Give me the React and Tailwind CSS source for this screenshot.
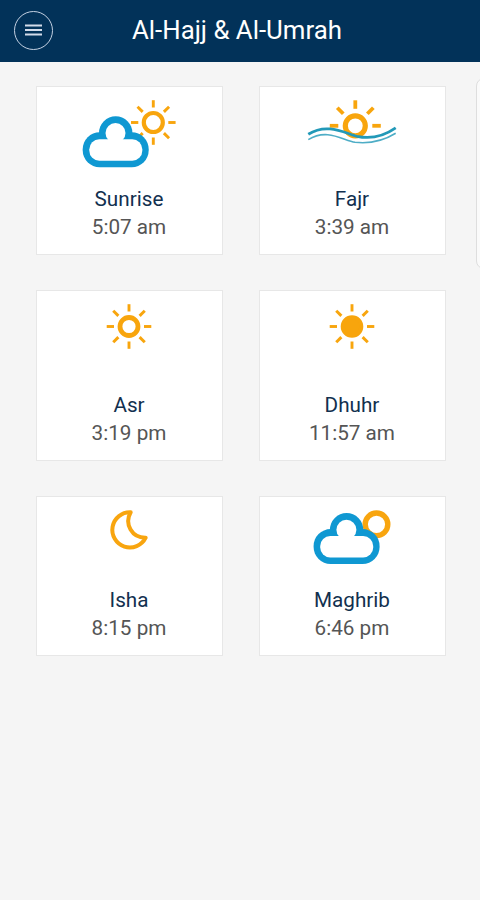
const FULL_SUN = [0, 45, 90, 135, 180, 225, 270, 315];
const HALF_SUN = [0, 45, 90, 270, 315];

const Sun = ({ x, y, r, width, from, to, rayWidth = 2.9, rays = FULL_SUN, filled }) => (
  <g transform={`translate(${x} ${y})`} stroke="#f8a50d">
    <circle r={r} strokeWidth={width} fill={filled ? "#f8a50d" : "none"} />
    {rays.map((angle) => (
      <path key={angle} d={`M0 ${-from}V${-to}`} strokeWidth={rayWidth} transform={`rotate(${angle})`} />
    ))}
  </g>
);

// outer shape in blue, the same shape smaller in white on top
const Cloud = ({ x, y }) => (
  <g transform={`translate(${x} ${y})`}>
    <g fill="#0f98d2">
      <circle cx="33" cy="17" r="16.7" />
      <rect x="0" y="16.3" width="66" height="35" rx="17" />
    </g>
    <g fill="#ffffff">
      <circle cx="32.8" cy="17" r="10" />
      <rect x="6.6" y="23.3" width="53" height="21.4" rx="10" />
    </g>
  </g>
);

const SunriseIcon = () => (
  <>
    <Sun x={83.3} y={35.5} r={9.5} width={4.2} from={15} to={22.3} />
    <Cloud x={12.7} y={29} />
  </>
);

const FajrIcon = () => (
  <>
    <Sun x={62.3} y={38.8} r={10} width={5.2} from={17} to={25.5} rayWidth={3.8} rays={HALF_SUN} />
    <path d="M15 53C31 40 48 52 62 52.5Q84 56 103 46V62H15Z" fill="#ffffff" />
    <g fill="none" stroke="#2299b8">
      <path d="M15.3 47.3C34 35.3 52 46.3 64 49.3Q84 53.8 102.7 40.8" strokeWidth="2.8" />
      <path d="M15.3 52.6C34 40.8 50 53.3 62 55.3Q84 57.8 102.7 46.3" strokeWidth="1.6" opacity="0.8" />
    </g>
  </>
);

const AsrIcon = () => <Sun x={59} y={35.5} r={9} width={4.8} from={15} to={22.3} />;

const DhuhrIcon = () => <Sun x={59} y={35.5} r={9.3} width={4} from={15} to={22.3} filled />;

const IshaIcon = () => (
  <path
    d="M60.7 15.3C54 27 62 41 75.7 40.7A17.6 17.6 0 1 1 60.7 15.3Z"
    fill="none"
    stroke="#f8a50f"
    strokeWidth="4"
    strokeLinejoin="round"
  />
);

const MaghribIcon = () => (
  <>
    <circle cx="83.5" cy="27.3" r="11.3" fill="none" stroke="#f8a50f" strokeWidth="5.4" />
    <Cloud x={20.6} y={15.8} />
  </>
);

const prayers = [
  { name: "Sunrise", time: "5:07 am", icon: SunriseIcon },
  { name: "Fajr", time: "3:39 am", icon: FajrIcon },
  { name: "Asr", time: "3:19 pm", icon: AsrIcon },
  { name: "Dhuhr", time: "11:57 am", icon: DhuhrIcon },
  { name: "Isha", time: "8:15 pm", icon: IshaIcon },
  { name: "Maghrib", time: "6:46 pm", icon: MaghribIcon },
];

const PrayerCard = ({ name, time, icon: Icon }) => (
  <div className="flex flex-col items-center justify-between bg-white pb-[13px] ring-1 ring-[#e7e7e7]">
    <svg className="h-[84px] w-[119px]" viewBox="0 0 119 84">
      <Icon />
    </svg>
    <div className="pr-px text-center text-[20.7px] leading-7">
      <h2 className="text-[#12304f]">{name}</h2>
      <p className="text-[#555555]">{time}</p>
    </div>
  </div>
);

const Header = () => (
  <header className="flex h-[62px] items-center bg-[#023259] pb-0.5 pl-3.5 text-white">
    <button className="flex size-[39px] items-center justify-center rounded-full border-[1.5px] border-[#c3d0e2]">
      <svg className="h-3 w-[17px]" viewBox="0 0 17 12" stroke="#d3dcea" strokeWidth="2.2">
        <path d="M0 1.5H17M0 6H17M0 10.5H17" />
      </svg>
    </button>
    <h1 className="ml-[79px] pt-0.5 text-[25.8px] leading-none">Al-Hajj &amp; Al-Umrah</h1>
  </header>
);

const App = () => {
  return (
    <div className="h-screen overflow-hidden bg-[#f5f5f5] font-[Roboto,sans-serif]">
      <Header />
      <main className="flex items-start overflow-hidden pb-1">
        <div className="ml-[37px] mt-[25px] grid shrink-0 grid-cols-[185px_185px] grid-rows-[167px_169px_158px] gap-x-[38px] gap-y-[37px]">
          {prayers.map((prayer) => (
            <PrayerCard key={prayer.name} {...prayer} />
          ))}
        </div>
        {/* edge of the next panel */}
        <div className="ml-[31px] mt-4 h-[191px] w-10 shrink-0 rounded-lg border border-[#dedede] bg-[#fafafa]" />
      </main>
    </div>
  );
};

export default App;
